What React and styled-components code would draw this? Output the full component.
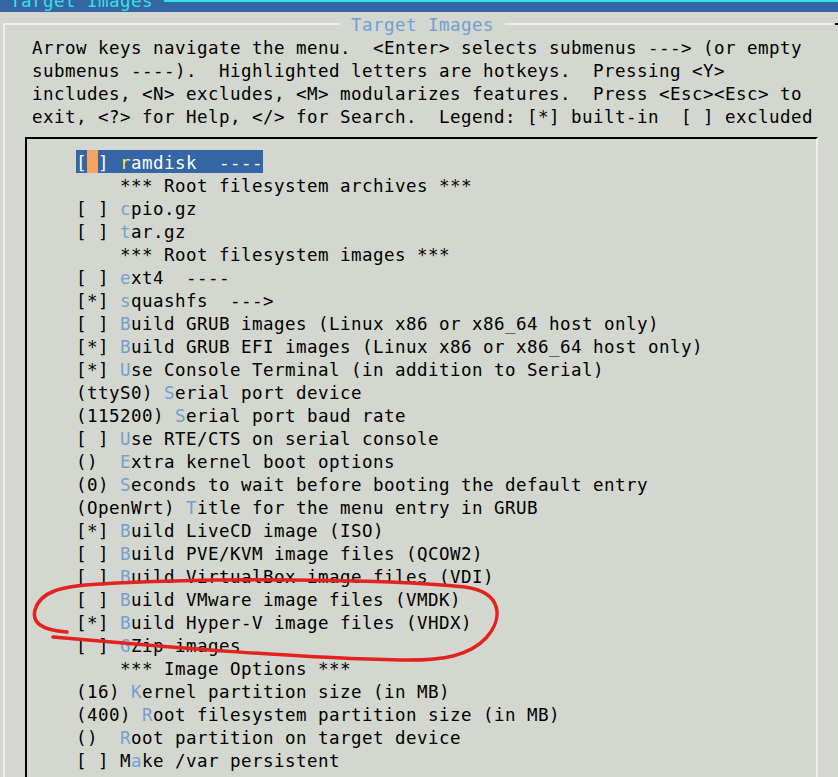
import React from 'react';
import styled, { createGlobalStyle } from 'styled-components';

const C = {
  gray: '#d3d7cf',
  blue: '#3465a4',
  cyan: '#34e2e2',
  light: '#eeeeec',
  hot: '#729fcf',
  yellow: '#fce94f',
  cursor: '#f5a460',
  red: '#e3211d',
};

const Global = createGlobalStyle`
  html, body { margin: 0; padding: 0; background: ${C.gray}; }
`;

const Screen = styled.div`
  position: relative;
  width: 838px;
  height: 777px;
  overflow: hidden;
  background: ${C.gray};
  font-family: 'DejaVu Sans Mono', 'Liberation Mono', monospace;
  font-size: 17.5px;
  letter-spacing: 0.465px;
  line-height: 23px;
  color: #000;
  white-space: pre;
`;

const TopBar = styled.div`
  display: flex;
  align-items: flex-start;
  height: 12px;
  overflow: hidden;
  background: ${C.blue};
`;

const BarTitle = styled.div`
  margin-top: -10px;
  padding-left: 10px;
  height: 22px;
  color: ${C.cyan};
`;

const BarLine = styled.div`
  flex: 1;
  height: 2px;
  background: ${C.cyan};
`;

const Dialog = styled.div`
  margin-left: 3px;
`;

const DialogHeader = styled.div`
  display: flex;
  align-items: flex-start;
  height: 23px;
`;

const HeaderCorner = styled.div`
  flex: none;
  width: 337px;
  height: 12px;
  margin-top: 11px;
  box-sizing: border-box;
  border-top: 2px solid ${C.light};
  border-left: 2px solid ${C.light};
`;

const HeaderTitle = styled.div`
  padding: 1.5px 11px 0;
  color: ${C.hot};
`;

const HeaderLine = styled.div`
  flex: 1;
  height: 2px;
  margin-top: 11px;
  background: ${C.light};
`;

const HeaderEnd = styled.div`
  flex: none;
  width: 3px;
  height: 2px;
  margin: 11px 0 0 2px;
  background: #000;
`;

const DialogBody = styled.div`
  border-left: 2px solid ${C.light};
  padding-left: 20px;
  height: 800px;
`;

const HelpText = styled.div`
  padding: 1.5px 0 0 7px;
`;

const MenuBox = styled.div`
  box-sizing: border-box;
  width: 793px;
  margin-top: 8.5px;
  padding: 11px 0 0 49px;
  border-top: 2px solid #000;
  border-left: 2px solid #000;
  border-right: 2px solid ${C.light};
  height: 700px;
`;

const MenuRow = styled.div`
  height: 21.5px;
  padding-top: 1.5px;
`;

const Selected = styled.span`
  display: inline-block;
  vertical-align: top;
  height: 21.5px;
  padding-top: 1.5px;
  margin-top: -1.5px;
  background: ${C.blue};
  color: #fff;
`;

const Cursor = styled.span`
  display: inline-block;
  vertical-align: top;
  width: 11px;
  height: 23px;
  margin-top: -1.5px;
  background: ${C.cursor};
`;

const Hot = styled.span`
  color: ${(p) => (p.$active ? C.yellow : C.hot)};
`;

const Annotation = styled.svg`
  position: absolute;
  left: 0;
  top: 0;
  pointer-events: none;
`;

const items = [
  ['    ', '', '*** Root filesystem archives ***'],
  ['[ ] ', 'c', 'pio.gz'],
  ['[ ] ', 't', 'ar.gz'],
  ['    ', '', '*** Root filesystem images ***'],
  ['[ ] ', 'e', 'xt4  ----'],
  ['[*] ', 's', 'quashfs  --->'],
  ['[ ] ', 'B', 'uild GRUB images (Linux x86 or x86_64 host only)'],
  ['[*] ', 'B', 'uild GRUB EFI images (Linux x86 or x86_64 host only)'],
  ['[*] ', 'U', 'se Console Terminal (in addition to Serial)'],
  ['(ttyS0) ', 'S', 'erial port device'],
  ['(115200) ', 'S', 'erial port baud rate'],
  ['[ ] ', 'U', 'se RTE/CTS on serial console'],
  ['()  ', 'E', 'xtra kernel boot options'],
  ['(0) ', 'S', 'econds to wait before booting the default entry'],
  ['(OpenWrt) ', 'T', 'itle for the menu entry in GRUB'],
  ['[*] ', 'B', 'uild LiveCD image (ISO)'],
  ['[ ] ', 'B', 'uild PVE/KVM image files (QCOW2)'],
  ['[ ] ', 'B', 'uild VirtualBox image files (VDI)'],
  ['[ ] ', 'B', 'uild VMware image files (VMDK)'],
  ['[*] ', 'B', 'uild Hyper-V image files (VHDX)'],
  ['[ ] ', 'G', 'Zip images'],
  ['    ', '', '*** Image Options ***'],
  ['(16) ', 'K', 'ernel partition size (in MB)'],
  ['(400) ', 'R', 'oot filesystem partition size (in MB)'],
  ['()  ', 'R', 'oot partition on target device'],
  ['[ ] M', 'a', 'ke /var persistent'],
];

const help = [
  'Arrow keys navigate the menu.  <Enter> selects submenus ---> (or empty',
  'submenus ----).  Highlighted letters are hotkeys.  Pressing <Y>',
  'includes, <N> excludes, <M> modularizes features.  Press <Esc><Esc> to',
  'exit, <?> for Help, </> for Search.  Legend: [*] built-in  [ ] excluded',
];

export default function App() {
  return (
    <Screen>
      <Global />
      <TopBar>
        <BarTitle>Target Images </BarTitle>
        <BarLine />
      </TopBar>
      <Dialog>
        <DialogHeader>
          <HeaderCorner />
          <HeaderTitle>Target Images</HeaderTitle>
          <HeaderLine />
          <HeaderEnd />
        </DialogHeader>
        <DialogBody>
          <HelpText>
            {help.map((l) => (
              <div key={l}>{l}</div>
            ))}
          </HelpText>
          <MenuBox>
            <MenuRow>
              <Selected>
                [<Cursor> </Cursor>] <Hot $active>r</Hot>amdisk  ----
              </Selected>
            </MenuRow>
            {items.map(([pre, hk, rest], i) => (
              <MenuRow key={i}>
                {pre}
                {hk && <Hot>{hk}</Hot>}
                {rest}
              </MenuRow>
            ))}
          </MenuBox>
        </DialogBody>
      </Dialog>
      <Annotation width="838" height="777" viewBox="0 0 838 777">
        <path
          d="M 67 632 C 40 630, 32 622, 35 610 C 40 592, 60 586, 100 584 C 200 578, 380 578, 465 587 C 502 592, 504 618, 486 638 C 470 655, 445 661, 400 660 C 300 658, 180 648, 53 637"
          fill="none"
          stroke={C.red}
          strokeWidth="3.5"
          strokeLinecap="round"
          strokeLinejoin="round"
        />
      </Annotation>
    </Screen>
  );
}
